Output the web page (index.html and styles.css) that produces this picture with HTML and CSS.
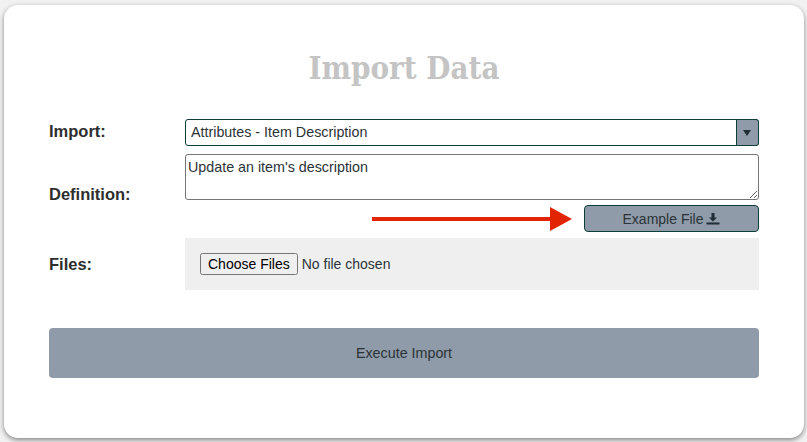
FILE: index.html
```html
<!DOCTYPE html>
<html lang="en">
<head>
    <meta charset="UTF-8">
    <meta name="viewport" content="width=device-width, initial-scale=1.0">
    <title>Import Data</title>
    <link rel="stylesheet" href="styles.css">
</head>
<body>
    <div class="card">
        <h1>Import Data</h1>

        <div class="form-row import-row">
            <label for="importType">Import:</label>
            <div class="select-wrapper">
                <select id="importType">
                    <option>Attributes - Item Description</option>
                </select>
                <span class="select-arrow"></span>
            </div>
        </div>

        <div class="form-row definition-row">
            <label for="definition">Definition:</label>
            <div class="definition-group">
                <textarea id="definition">Update an item's description</textarea>
                <div class="example-row">
                    <svg class="red-arrow" width="200" height="26" viewBox="0 0 200 26">
                        <path d="M0 11h178V1l22 12-22 12V15H0z" fill="#e32400"/>
                    </svg>
                    <button class="example-button">
                        Example File
                        <svg width="14" height="14" viewBox="0 0 14 14">
                            <path d="M5.500 1h3v4.500H11L7 9.500 3 5.500h2.500z" fill="#1f2d36"/>
                            <rect x="0.500" y="10.500" width="13" height="2" fill="#1f2d36"/>
                        </svg>
                    </button>
                </div>
            </div>
        </div>

        <div class="form-row files-row">
            <label for="files">Files:</label>
            <div class="file-box">
                <input type="file" id="files" multiple>
            </div>
        </div>

        <button class="execute-button">Execute Import</button>
    </div>
</body>
</html>
```

FILE: styles.css
```css
body {
    font-family: "Liberation Sans", Arial, sans-serif;
    background-color: #f1f1f1;
    margin: 0;
    padding: 5px 3px 4px 4px;
    color: #2b3338;
}

.card {
    box-sizing: border-box;
    height: 433px;
    padding: 44px 45px 0 45px;
    background-color: white;
    border-radius: 14px;
    box-shadow: 0 2px 5px rgba(0, 0, 0, 0.45);
}

h1 {
    font-family: "DejaVu Serif Condensed", "DejaVu Serif", serif;
    font-size: 31px;
    line-height: 38px;
    font-weight: 700;
    color: #c4c4c4;
    text-align: center;
    margin: 0 0 32px 0;
}

.form-row {
    display: grid;
    grid-template-columns: 136px 574px;
    align-items: center;
}

label {
    font-size: 16.500px;
    font-weight: 700;
    color: #2e2e2e;
}

.import-row label {
    padding-bottom: 2px;
}

.definition-row label {
    padding-top: 3px;
}

.select-wrapper {
    position: relative;
    height: 27px;
}

select {
    width: 100%;
    height: 27px;
    padding: 0 0 2px 5px;
    font-family: inherit;
    font-size: 14.300px;
    color: #2b3338;
    background-color: white;
    border: 1px solid #0f3d3a;
    border-radius: 3px;
    appearance: none;
}

.select-arrow {
    position: absolute;
    top: 0;
    right: 0;
    box-sizing: border-box;
    width: 23px;
    height: 27px;
    background-color: #8f9ba8;
    border: 1px solid #0f3d3a;
    border-radius: 0 3px 3px 0;
}

.select-arrow::after {
    content: "";
    position: absolute;
    left: 6px;
    top: 10px;
    border-left: 4px solid transparent;
    border-right: 4px solid transparent;
    border-top: 6px solid #222d36;
}

.definition-row {
    margin-top: 8px;
}

.definition-group {
    display: flex;
    flex-direction: column;
    gap: 5px;
}

textarea {
    box-sizing: border-box;
    display: block;
    width: 100%;
    height: 46px;
    padding: 4px 2px 2px 2px;
    font-family: inherit;
    font-size: 14.300px;
    color: #2b3338;
    background-color: white;
    border: 1px solid #767676;
    border-radius: 3px;
}

.example-row {
    display: flex;
    justify-content: flex-end;
    align-items: center;
    gap: 12px;
}

.red-arrow {
    display: block;
}

.example-button {
    display: flex;
    justify-content: center;
    align-items: center;
    gap: 3px;
    width: 175px;
    height: 27px;
    padding: 0;
    font-family: inherit;
    font-size: 14px;
    color: #2b3338;
    background-color: #8f9ba8;
    border: 1px solid #0f3d3a;
    border-radius: 4px;
}

.files-row {
    margin-top: 6px;
}

.file-box {
    display: flex;
    align-items: center;
    height: 52px;
    padding-left: 15px;
    background-color: #efefef;
}

input[type="file"] {
    font-family: inherit;
    font-size: 14px;
    color: #2b3338;
}

.execute-button {
    display: block;
    width: 710px;
    height: 50px;
    margin-top: 38px;
    font-family: inherit;
    font-size: 14.300px;
    color: #2b3338;
    background-color: #8f9ba8;
    border: none;
    border-radius: 4px;
}
```
